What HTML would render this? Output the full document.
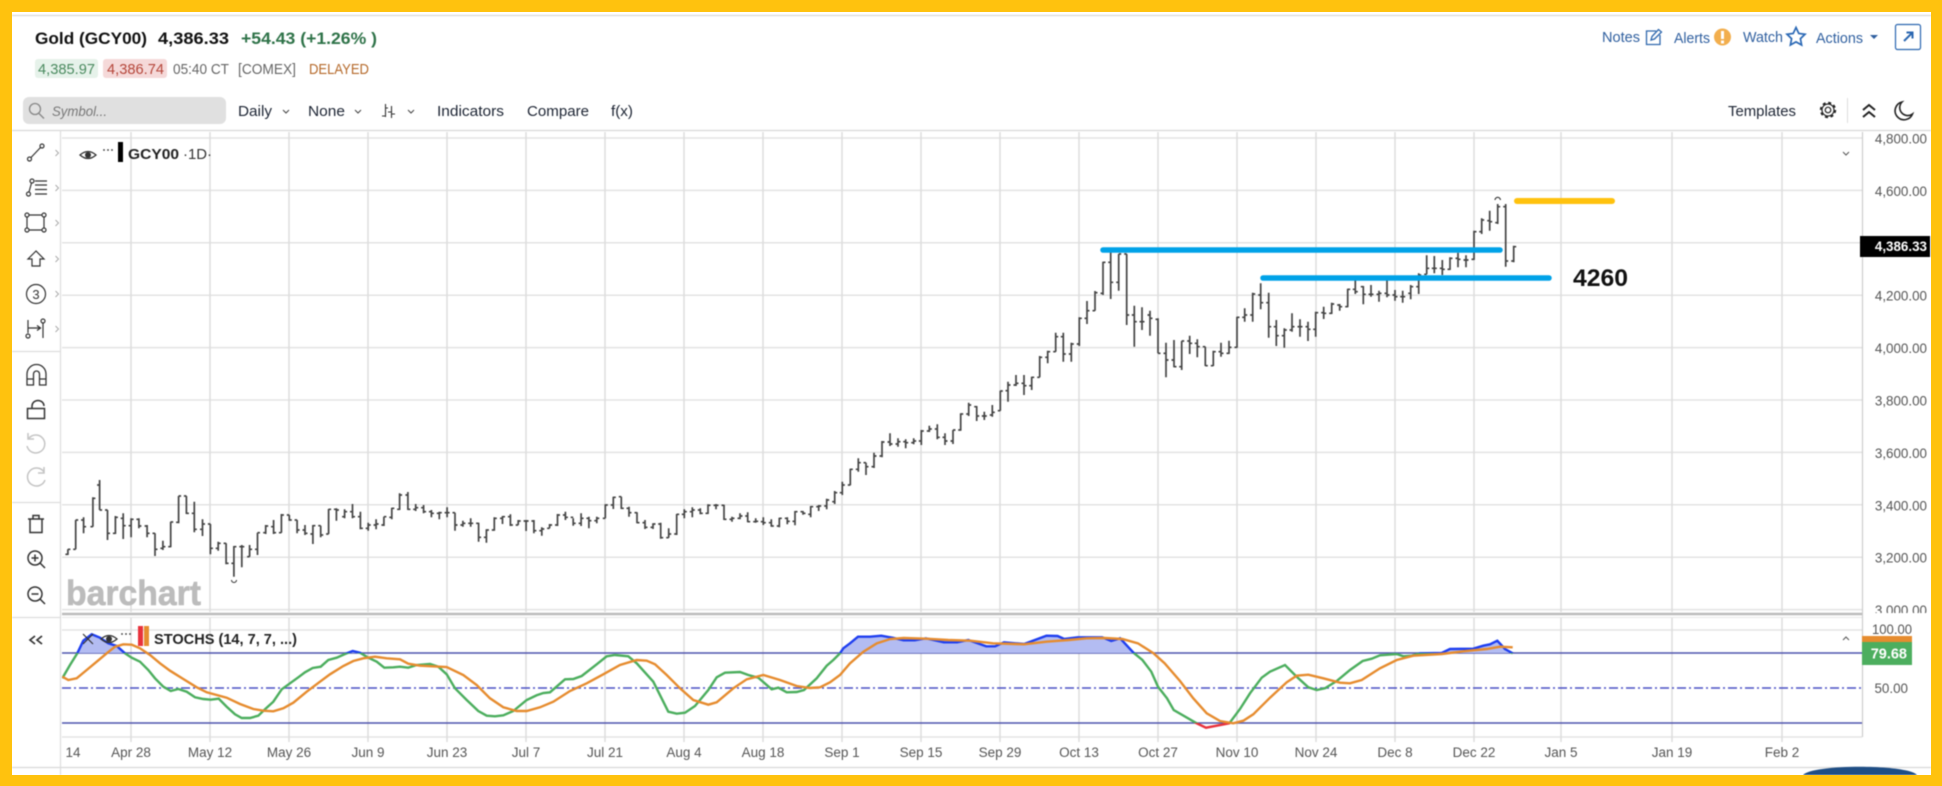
<!DOCTYPE html>
<html><head><meta charset="utf-8"><title>Gold chart</title>
<style>
html,body{margin:0;padding:0;background:#fff;width:1942px;height:786px;overflow:hidden}
svg{display:block;position:absolute;left:0;top:0;font-family:"Liberation Sans",Arial,sans-serif;filter:blur(.4px)}
.f{position:absolute;background:#ffc20e}
</style></head><body>
<svg id="s" width="1942" height="786" viewBox="0 0 1942 786" xmlns="http://www.w3.org/2000/svg">
<defs>
<clipPath id="above"><rect x="62" y="600" width="1800" height="53"/></clipPath>
<clipPath id="mid"><rect x="62" y="653" width="1800" height="70"/></clipPath>
<clipPath id="below"><rect x="62" y="723" width="1800" height="20"/></clipPath>
<clipPath id="axc"><rect x="1862" y="130" width="70" height="483"/></clipPath>
</defs>
<rect width="1942" height="786" fill="#fff"/>
<g stroke="#d8d8d8" stroke-width="1.2"><path d="M12 15.5H1931M12 130.5H1931M12 767.5H1931" fill="none"/></g>
<path d="M60.5 130V775M12 351.5H60M12 502.5H60M12 617.5H60" stroke="#ddd" stroke-width="1.2" fill="none"/>

<!-- grid -->
<g id="grid" fill="none"></g>
<path d="M1862.5 132V737" stroke="#ccc" stroke-width="1.2"/>
<path d="M62 614H1862" stroke="#bbb" stroke-width="2.5"/>
<path d="M62 617.5H1862" stroke="#e8e8e8"/>

<!-- logo -->
<text x="66" y="605" font-size="35" font-weight="700" fill="#bcbcbc" stroke="#bcbcbc" stroke-width=".6" textLength="135" lengthAdjust="spacingAndGlyphs">barchart</text>

<!-- bars -->
<path id="bars" fill="none" stroke="#444" stroke-width="1.7"/>
<path d="M231.5 580a2.5 2.5 0 0 0 5 0M1495 200a2.7 2.7 0 0 1 5.4 0" fill="none" stroke="#333" stroke-width="1.1"/>

<!-- overlays -->
<path d="M1103 250H1500M1263 278H1549" stroke="#00a2e8" stroke-width="5.5" stroke-linecap="round"/>
<path d="M1517 201H1612" stroke="#ffc20e" stroke-width="6" stroke-linecap="round"/>
<text x="1573" y="286" font-size="24" font-weight="700" fill="#111" textLength="55" lengthAdjust="spacingAndGlyphs">4260</text>

<!-- stoch -->
<path d="M62 653H1862M62 723H1862" stroke="#4d53ad" stroke-width="1.5"/>
<path d="M62 688H1862" stroke="#4a50c4" stroke-width="1.4" stroke-dasharray="9 3 2 3"/>
<path id="fill" fill="#b3bcf2" clip-path="url(#above)"/>
<path id="gA" fill="none" stroke="#1f3ff0" stroke-width="2.4" clip-path="url(#above)"/>
<path id="gB" fill="none" stroke="#4cae5e" stroke-width="2.4" clip-path="url(#mid)"/>
<path id="gC" fill="none" stroke="#e8323c" stroke-width="2.4" clip-path="url(#below)"/>
<path id="or" fill="none" stroke="#e68c2f" stroke-width="2.4"/>

<!-- header -->
<g font-weight="700">
<text x="35" y="44" font-size="16.500" fill="#111" textLength="112" lengthAdjust="spacingAndGlyphs">Gold (GCY00)</text>
<text x="158" y="44" font-size="16.500" fill="#111" textLength="71" lengthAdjust="spacingAndGlyphs">4,386.33</text>
<text x="241" y="44" font-size="16.500" fill="#2f7349" textLength="136" lengthAdjust="spacingAndGlyphs">+54.43 (+1.26% )</text>
</g>
<rect x="35" y="59" width="63" height="19" rx="3" fill="#e6f2ea"/>
<rect x="103" y="59" width="64" height="19" rx="3" fill="#f5d9d9"/>
<g font-size="14.500">
<text x="38" y="74" fill="#4a8a5f" textLength="57" lengthAdjust="spacingAndGlyphs">4,385.97</text>
<text x="107" y="74" fill="#b5463a" textLength="57" lengthAdjust="spacingAndGlyphs">4,386.74</text>
<text x="173" y="74" fill="#666" textLength="56" lengthAdjust="spacingAndGlyphs">05:40 CT</text>
<text x="238" y="74" fill="#666" textLength="58" lengthAdjust="spacingAndGlyphs">[COMEX]</text>
<text x="309" y="74" fill="#b5692a" textLength="60" lengthAdjust="spacingAndGlyphs">DELAYED</text>
</g>

<!-- toolbar -->
<rect x="23" y="97" width="203" height="27" rx="6" fill="#e0e0e0"/>
<g fill="none" stroke="#888" stroke-width="1.3"><circle cx="35" cy="109" r="5.5"/><path d="M39 113.5L44 118.5"/></g>
<text x="52" y="116" font-size="14" font-style="italic" fill="#777" textLength="55" lengthAdjust="spacingAndGlyphs">Symbol...</text>
<g font-size="15" fill="#1c2433">
<text x="238" y="116" textLength="34" lengthAdjust="spacingAndGlyphs">Daily</text>
<text x="308" y="116" textLength="37" lengthAdjust="spacingAndGlyphs">None</text>
<text x="437" y="116" textLength="67" lengthAdjust="spacingAndGlyphs">Indicators</text>
<text x="527" y="116" textLength="62" lengthAdjust="spacingAndGlyphs">Compare</text>
<text x="611" y="116" textLength="22" lengthAdjust="spacingAndGlyphs">f(x)</text>
<text x="1728" y="116" textLength="68" lengthAdjust="spacingAndGlyphs">Templates</text>
</g>
<path d="M283 110l3 3 3-3M355 110l3 3 3-3M408 110l3 3 3-3" fill="none" stroke="#444" stroke-width="1"/>
<path d="M385.500 104V117M382 116H385M385 108H388M391.500 106V118M388 112H391M391.500 114H395" fill="none" stroke="#333" stroke-width="1.1"/>

<!-- top right -->
<g font-size="14.500" fill="#2f5f9f">
<text x="1602" y="42" textLength="38" lengthAdjust="spacingAndGlyphs">Notes</text>
<text x="1674" y="43" textLength="36" lengthAdjust="spacingAndGlyphs">Alerts</text>
<text x="1743" y="42" textLength="40" lengthAdjust="spacingAndGlyphs">Watch</text>
<text x="1816" y="43" textLength="47" lengthAdjust="spacingAndGlyphs">Actions</text>
</g>
<path d="M1656 31H1646.500V44.500H1660V35M1651 40L1652 36.500 1658.500 29.500 1661.500 32 1654.500 39Z" fill="none" stroke="#2f68ad" stroke-width="1.3"/>
<circle cx="1722.500" cy="37" r="8.500" fill="#f2ae4d"/>
<rect x="1721" y="31" width="3" height="8" fill="#fff"/><rect x="1721" y="40.500" width="3" height="3" fill="#fff"/>
<path d="M1796 27.500L1798.800 33.500 1805 34.300 1800.400 38.700 1801.600 45 1796 41.900 1790.400 45 1791.600 38.700 1787 34.300 1793.200 33.500Z" fill="none" stroke="#2a68b5" stroke-width="1.7"/>
<path d="M1870 35H1878L1874 39Z" fill="#2f5f9f"/>
<rect x="1895.500" y="24.500" width="25" height="25" rx="2" fill="#fff" stroke="#2a66b0" stroke-width="1.2"/>
<path d="M1904 41L1912 33M1906.500 32.500H1912.500V38.500" fill="none" stroke="#2a66b0" stroke-width="2"/>

<g fill="none" stroke="#222">
<circle cx="1828" cy="110" r="2.800" stroke-width="1.2"/>
<circle cx="1828" cy="110" r="6" stroke-width="1.200"/>
<circle cx="1828" cy="110" r="7.300" stroke-width="1.800" stroke-dasharray="3 2.730"/>
<path d="M1863 110l6-5 6 5M1863 117l6-5 6 5" stroke-width="2"/>
<path d="M1902 102a9 9 0 1 0 10.500 12a8 8 0 0 1-10.500-12Z" stroke-width="1.600"/>
</g>
<path d="M1847.500 98V123" stroke="#ddd"/>

<!-- left tools -->
<g fill="none" stroke="#333" stroke-width="1.2">
<circle cx="29.500" cy="159" r="2"/><circle cx="42" cy="146" r="2"/><path d="M31 157.500L40.500 147.500"/>
<circle cx="28.500" cy="194" r="2"/><circle cx="32" cy="181" r="2"/><path d="M29 192L31.500 183M35 181H47M35 185H47M35 189.500H47M35 194H47"/>
<path d="M27 215H44V230H27Z"/><circle cx="27" cy="215" r="2" fill="#fff"/><circle cx="44" cy="215" r="2" fill="#fff"/><circle cx="27" cy="230" r="2" fill="#fff"/><circle cx="44" cy="230" r="2" fill="#fff"/>
<path d="M36 251L28 259H32V266H40V259H44Z"/>
<circle cx="36" cy="294" r="9.500"/>
<path d="M28 320V333M28 328H40M37 325.500L40.500 328 37 330.500M43 323V338"/><circle cx="28" cy="336" r="2"/><circle cx="43" cy="321" r="2"/>
<path d="M27 385V374a9.500 9.500 0 0 1 19 0V385H39.500V374a3 3 0 0 0-6 0V385ZM27 379H33.500M39.500 379H46" stroke-width="1.300"/>
<path d="M27.500 408.500H44.500V418.500H27.500ZM32 408V406a6 5.500 0 0 1 12 0" stroke-width="1.500"/>
<path d="M28 519H44M33 519V515.500H39V519M30 519V532.500H42V519" stroke-width="1.500"/>
<circle cx="35" cy="558" r="7"  stroke-width="1.500"/><path d="M40 563L45 568M31.500 558H38.500M35 554.500V561.500" stroke-width="1.500"/>
<circle cx="35" cy="594" r="7" stroke-width="1.500"/><path d="M40 599L45 604M31.500 594H38.500" stroke-width="1.500"/>
<path d="M35 636l-5 4 5 4M42 636l-5 4 5 4" stroke-width="1.700"/>
</g>
<text x="36" y="299" font-size="13" fill="#333" text-anchor="middle">3</text>
<path d="M29 438A9 9 0 1 1 27 446M28 433V439H34M44 472A9 9 0 1 0 45 480M44 467V473H38" fill="none" stroke="#c4c4c4" stroke-width="1.500"/>
<path d="M55.500 150l3 3-3 3M55.500 185l3 3-3 3M55.500 220l3 3-3 3M55.500 256l3 3-3 3M55.500 291l3 3-3 3M55.500 326l3 3-3 3" fill="none" stroke="#aaa"/>

<!-- legends -->
<g fill="#333"><path d="M80 155q8-7 16 0q-8 7-16 0Z" fill="none" stroke="#333" stroke-width="1.300"/><circle cx="88" cy="155" r="3"/>
<circle cx="104" cy="150" r=".9"/><circle cx="108" cy="150" r=".9"/><circle cx="112" cy="150" r=".9"/></g>
<rect x="118" y="142" width="5" height="20" fill="#000"/>
<text x="128" y="159" font-size="14.500" font-weight="700" fill="#222" textLength="51" lengthAdjust="spacingAndGlyphs">GCY00</text>
<text x="183" y="159" font-size="14.500" fill="#333" textLength="29" lengthAdjust="spacingAndGlyphs">·1D·</text>
<path d="M1843 152l3 3 3-3M1843 640l3-3 3 3" fill="none" stroke="#555"/>

<path d="M83 634L93 644M93 634L83 644" stroke="#333" stroke-width="1.200"/>
<g fill="#333"><path d="M101 639q8-7 16 0q-8 7-16 0Z" fill="none" stroke="#333" stroke-width="1.300"/><circle cx="109" cy="639" r="3"/>
<circle cx="122" cy="634" r=".9"/><circle cx="126" cy="634" r=".9"/><circle cx="130" cy="634" r=".9"/></g>
<rect x="138" y="626" width="5" height="20" fill="#e8323c"/><rect x="144" y="626" width="5" height="20" fill="#e68c2f"/>
<text x="154" y="644" font-size="15" font-weight="700" fill="#222" textLength="143" lengthAdjust="spacingAndGlyphs">STOCHS (14, 7, 7, ...)</text>

<!-- price axis -->
<g id="axis" font-size="13.400" fill="#555" text-anchor="end" clip-path="url(#axc)"></g>
<rect x="1860" y="236" width="70" height="21" fill="#000"/>
<text x="1927" y="251" font-size="13.400" font-weight="700" fill="#fff" text-anchor="end">4,386.33</text>
<text x="1912" y="634" font-size="13.400" fill="#555" text-anchor="end" textLength="40" lengthAdjust="spacingAndGlyphs">100.00</text>
<text x="1908" y="693" font-size="13.400" fill="#555" text-anchor="end">50.00</text>
<rect x="1862" y="636" width="50" height="8" fill="#e68c2f"/>
<rect x="1862" y="642" width="50" height="23" fill="#4cae5e"/>
<text x="1907" y="658.500" font-size="14.500" font-weight="700" fill="#fff" text-anchor="end">79.68</text>

<!-- time axis -->
<g id="xl" font-size="13.500" fill="#555" text-anchor="middle"></g>
<text x="73" y="757" font-size="13.500" fill="#555" text-anchor="middle">14</text>

<path d="M1803 775C1812 764 1908 764 1917 775Z" fill="#1f4e85"/>
</svg>
<div class="f" style="left:0;top:0;width:1942px;height:12px"></div>
<div class="f" style="left:0;top:0;width:12px;height:786px"></div>
<div class="f" style="left:1931px;top:0;width:11px;height:786px"></div>
<div class="f" style="left:0;top:775px;width:1942px;height:11px"></div>
<script>
(function(){
var NS="http://www.w3.org/2000/svg";
function $(i){return document.getElementById(i)}
var vx=[131,210,289,368,447,526,605,684,763,842,921,1000,1079,1158,1237,1316,1395,1474,1561,1672,1782];
var xn=["Apr 28","May 12","May 26","Jun 9","Jun 23","Jul 7","Jul 21","Aug 4","Aug 18","Sep 1","Sep 15","Sep 29","Oct 13","Oct 27","Nov 10","Nov 24","Dec 8","Dec 22","Jan 5","Jan 19","Feb 2"];
var d="";
for(var i=0;i<10;i++){d+="M62 "+(138+i*52.4)+"H1862";}
d+="M62 630H1862M62 737H1862";
var h=document.createElementNS(NS,"path");h.setAttribute("d",d);h.setAttribute("stroke","#e3e3e3");h.setAttribute("stroke-width","1.500");$("grid").appendChild(h);
d="";vx.forEach(function(x){d+="M"+x+" 132V612M"+x+" 617V742";});
var v=document.createElementNS(NS,"path");v.setAttribute("d",d);v.setAttribute("stroke","#ddd");v.setAttribute("stroke-width","1.500");$("grid").appendChild(v);
vx.forEach(function(x,i){var t=document.createElementNS(NS,"text");t.setAttribute("x",x);t.setAttribute("y",757);t.textContent=xn[i];$("xl").appendChild(t);});
var pr=["4,800.00","4,600.00","4,400.00","4,200.00","4,000.00","3,800.00","3,600.00","3,400.00","3,200.00","3,000.00"];
pr.forEach(function(p,i){var t=document.createElementNS(NS,"text");t.setAttribute("x",1927);t.setAttribute("y",143.500+i*52.4);t.textContent=p;$("axis").appendChild(t);});

var segs=[
{x:40,sx:2.8,y:460,d:[78,268,285,283,268,100,180,268,268,180,122,172,220,180,200,148,112,200,200,115,167,60,150,75,150,189,150,240,150,220,211,168,222,220,172,233,160,237,175,197,255,175,232,197,178,277,175,205,178,198,300,195,232,198,220,322,220,288,220,268,344,242,270,265,260,366,185,262,260,186,388,108,190,187,108,410,108,162,108,160,432,125,217,160,208,455,178,228,208,192,477,192,283,192,265,499,245,272,265,250,521,250,313,250,310,543,258,350,310,260,565,255,322,260,260,587,255,290,290,268,609,218,285,268,218,632,195,222,218,198,654,180,222,200,218,676,162,218,218,165,698,165,182,165,180,720,180,220,180,210,742,195,225,210,220,764,195,252,222,197,786,197,232,197,225,808,147,222,222,148,830,145,182,148,150,853,148,175,170,155,875,132,175,155,170,897,155,208,170,205,919,188,212,205,195,941,178,208,195,192,963,170,198,195,170,985,143,178,172,145,1007,100,150,148,105,1030,96,150,105,148,1052,132,153,148,143,1074,135,160,143,155,1096,150,172,155,160,1118,155,178,160,158,1140,142,172,158,158,1162,158,212,158,195,1184,182,200,195,190,1206,175,200,190,190,1228,188,245,190,232,1250,208,248,232,210,1272,172,212,210,175,1295,168,192,175,170,1317,163,198,170,195,1339,180,195,195,183,1361,180,213,183,183,1383,180,220,183,212,1405,202,227,212,207,1427,192,205,205,195,1449,162,198,195,165,1471,155,180,165,172,1493,175,197,172,190,1515,160,198,190,175,1537,170,205,175,182,1559,170,190,182,175]},
{x:560,sx:3,y:380,d:[136,373,415,415,375,160,350,387,375,352,184,350,387,350,385,207,380,410,385,398,231,397,430,398,428,255,420,447,428,442,279,430,447,442,432,302,428,476,432,473,326,445,473,473,462,350,402,465,462,403,373,388,415,403,395,397,382,412,395,390,421,385,403,390,400,444,373,402,400,376,468,372,388,376,376,492,374,420,376,418,516,410,425,418,415,540,400,418,415,408,563,397,427,408,425,587,415,428,425,424,610,412,435,425,428,634,418,440,428,438,658,413,442,438,415,682,412,433,415,424,705,393,436,424,395,729,393,404,395,400,752,378,412,403,380,776,375,393,380,378,800,356,388,378,360,824,333,372,365,338,847,305,345,338,315,871,266,316,315,268,895,235,275,268,248,918,248,285,248,260,942,218,264,260,228,966,183,232,228,186,990,160,198,186,192,1014,175,200,192,185,1037,178,205,185,188,1061,175,193,188,183,1084,150,195,183,153,1108,137,156,153,147,1132,133,178,147,172,1155,160,195,172,183,1179,150,192,183,150,1202,100,152,150,102,1226,68,108,102,75,1250,78,123,80,108,1273,95,120,108,108,1297,75,110,105,97,1321,32,92,92,33]},
{x:840,sx:3,y:240,d:[504,425,485,452,435,528,405,438,435,430,552,405,465,430,437,575,410,450,437,412,599,348,412,412,352,623,332,370,352,335,647,278,335,335,290,670,278,365,290,342,694,308,365,342,312,718,232,318,312,235,741,183,252,235,212,765,153,212,212,158,789,65,165,160,67,812,30,177,67,127,836,42,152,127,42,860,42,255,42,225,883,197,320,225,245]},
{x:1080,sx:3,y:180,d:[186,382,450,425,425,210,392,467,405,415,234,415,520,418,520,258,488,592,520,540,282,480,562,540,560,305,483,570,560,483,329,467,522,483,490,352,478,532,490,500,376,500,558,500,557,400,512,558,557,515,423,488,530,515,520,447,482,522,520,502,471,410,503,502,412,494,385,425,412,405,518,338,425,405,342,542,310,388,345,368,566,338,473,368,440,589,420,498,440,467,613,445,503,467,450,636,400,455,450,440,660,418,470,440,440,684,425,483,440,448,707,395,470,448,398,731,380,417,398,400,755,368,402,400,372,779,372,392,375,380,803,326,382,380,328,826,300,342,328,335,850,318,373,320,343,873,315,350,343,343,897,332,365,343,340,921,300,352,340,345,945,330,362,345,350,968,332,368,350,350,992,315,358,340,320,1016,280,342,320,285,1040,226,283,283,265,1063,228,280,265,265,1087,240,285,265,268,1110,232,270,268,235,1134,218,262,235,238,1158,226,262,240,240,1182,152,240,238,155,1205,115,162,155,120,1229,92,152,122,125,1253,72,132,128,80,1277,72,260,80,243,1301,197,247,243,200]}
];
var b="";
segs.forEach(function(s){for(var i=0;i<s.d.length;i+=5){var x=(s.x+s.d[i]/s.sx).toFixed(1),
 Y=function(z){return (s.y+z/3).toFixed(1)};
 b+="M"+x+" "+Y(s.d[i+1])+"V"+Y(s.d[i+2])+"M"+(x-2.5).toFixed(1)+" "+Y(s.d[i+3])+"H"+x+"M"+x+" "+Y(s.d[i+4])+"h2.500";}});
$("bars").setAttribute("d",b);

function conv(a,x0,sx,y0){var o=[];for(var i=0;i<a.length;i+=2)o.push([x0+a[i]/sx,y0+a[i+1]/3]);return o;}
var G=[].concat(
 conv([187,595,210,555,232,520,250,482,275,463,300,473,325,490,350,498,375,520,395,533,420,545,445,570,465,595,490,620,512,633,535,627,560,635,585,652,610,657,632,659,656,656,680,680,705,703,725,714,750,714,775,707,795,688,820,665,845,628,870,610,895,592,915,577,938,564,962,560,985,540,1010,533,1035,522,1058,513,1080,518,1105,533,1130,545,1153,563,1180,562],0,3,480),
 conv([60,125,85,128,110,120,150,117,175,125,200,148,225,190,260,225,295,258,320,272,345,274,370,271,400,258,440,225,470,211,490,204,510,202,555,163,580,162,605,153,650,118,680,94,705,90,745,94,770,115,820,170,865,260,890,266,915,263,945,243,985,195,1010,157,1035,143,1080,141,1105,150,1135,158,1175,193,1195,188,1220,202,1250,201,1272,195,1310,160,1340,122,1360,105,1380,85],380,3,625),
 conv([545,85,560,70,578,50,605,50,630,47,655,53,680,61,705,61,730,55,770,67,800,67,825,60,865,79,885,79,905,67,950,72,1000,47,1025,48,1040,57,1070,52,1125,52,1145,63,1165,55,1195,98,1215,120,1235,155,1250,200,1270,235,1285,270],600,2.24,620),
 conv([50,295,78,308,148,295,180,252,210,205,245,158,270,140,315,120,350,155,385,187,410,195,435,190,470,168,510,135,548,108,575,101,600,91,650,87,670,94,695,92,720,85,785,84,810,72,880,71,910,62,930,58,952,47,975,72,998,85],1180,3,625));
var O=[].concat(
 conv([187,590,205,600,230,595,260,570,290,545,320,520,345,500,370,493,395,494,420,505,450,525,480,550,510,572,550,597,590,622,620,637,650,645,680,653,720,672,760,687,790,692,820,694,850,685,880,668,920,635,960,605,990,583,1030,558,1060,543,1090,535,1125,530,1160,535],0,3,480),
 conv([60,103,85,116,120,122,200,126,250,150,290,180,330,220,370,247,410,258,440,258,480,247,520,230,570,198,620,175,670,148,720,120,770,105,800,107,825,118,860,150,900,190,940,225,985,239,1010,232,1060,190,1100,163,1150,150,1200,165,1250,183,1290,189,1320,187,1350,172,1380,150],380,3,625),
 conv([560,130,590,95,620,70,650,57,680,54,730,56,780,60,830,62,880,70,950,73,1000,65,1050,60,1090,55,1130,54,1170,57,1205,70,1240,100,1265,130],600,2.24,620),
 conv([0,168,40,220,80,265,120,288,160,295,190,287,220,268,270,218,320,172,350,152,385,149,430,160,480,173,510,175,545,165,600,130,650,105,700,92,785,87,850,79,920,72,960,65,998,67],1180,3,625));
function P(a){return "M"+a.map(function(p){return p[0].toFixed(1)+" "+p[1].toFixed(1)}).join("L")}
var g=P(G);$("gA").setAttribute("d",g);$("gB").setAttribute("d",g);$("gC").setAttribute("d",g);
$("or").setAttribute("d",P(O));
$("fill").setAttribute("d",g+"L"+G[G.length-1][0].toFixed(1)+" 653L"+G[0][0].toFixed(1)+" 653Z");
})();
</script>
</body></html>
